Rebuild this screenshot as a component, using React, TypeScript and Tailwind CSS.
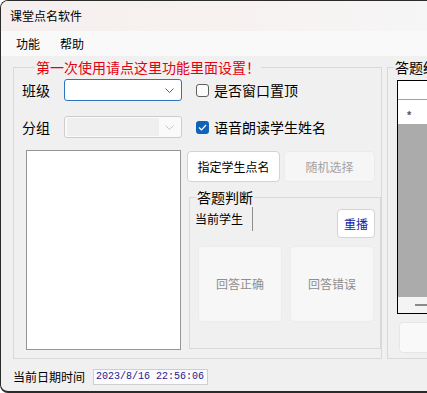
const cjk = "font-['Microsoft_YaHei','Noto_Sans_CJK_SC',sans-serif]";

function Chevron({ color }: { color: string }) {
  return (
    <svg width="9" height="5" viewBox="0 0 9 5" className="shrink-0">
      <polyline points="0.5,0.5 4.5,4.5 8.5,0.5" fill="none" stroke={color} strokeWidth="1" />
    </svg>
  );
}

function Check({ checked }: { checked?: boolean }) {
  if (checked) {
    return (
      <div className="w-[13px] h-[13px] rounded-[3px] bg-[#0f62b8] flex items-center justify-center shrink-0">
        <svg width="9" height="7" viewBox="0 0 9 7">
          <polyline points="1,3.5 3.5,6 8,1" fill="none" stroke="#ffffff" strokeWidth="1.2" />
        </svg>
      </div>
    );
  }
  return <div className="w-[13px] h-[13px] rounded-[3px] border border-[#5f5f5f] bg-[#fbfbfb] shrink-0" />;
}

export default function App() {
  return (
    <div
      className={`w-[427px] h-[393px] overflow-hidden bg-[#f0f0f0] flex flex-col border-l border-t border-b-2 border-[#2b2b2b] rounded-l-[8px] text-black ${cjk}`}
    >
      {/* title bar */}
      <div className="h-[30px] shrink-0 flex items-center pl-[9px] text-[12px] bg-linear-to-r from-[#f5efef] via-[#f7f1f0] to-[#f6f6f6]">
        课堂点名软件
      </div>

      {/* menu */}
      <div className="h-[25px] shrink-0 flex items-center pl-[15px] gap-[20px] text-[12px] bg-[#f9f9f9]">
        <span>功能</span>
        <span>帮助</span>
      </div>

      <div className="flex-1 flex flex-col">
        <div className="flex mt-[2px]">
          {/* left group */}
          <fieldset className="ml-[12px] w-[371px] h-[301px] border border-[#d9d9d9] p-0 m-0 flex flex-col">
            <legend className="ml-[21px] px-[1px] text-[14px] leading-[18px] text-[#e60012]">
              第一次使用请点这里功能里面设置！
            </legend>

            <div className="mt-[3px] pl-[8px] flex items-center h-[22px]">
              <span className="w-[42px] text-[14px]">班级</span>
              <div className="w-[118px] h-[22px] bg-white border border-[#2a76bf] rounded-[3px] flex items-center justify-end pr-[7px]">
                <Chevron color="#606060" />
              </div>
              <div className="ml-[14px]">
                <Check />
              </div>
              <span className="ml-[5px] text-[14px]">是否窗口置顶</span>
            </div>

            <div className="mt-[15px] pl-[8px] flex items-center h-[22px]">
              <span className="w-[42px] text-[14px]">分组</span>
              <div className="w-[118px] h-[22px] bg-[#fafafa] border border-[#cdcdcd] rounded-[3px] flex items-center pr-[7px]">
                <div className="flex-1 h-[18px] ml-[2px] mr-[6px] bg-[#efefef]" />
                <Chevron color="#c4c4c4" />
              </div>
              <div className="ml-[14px]">
                <Check checked />
              </div>
              <span className="ml-[5px] text-[14px]">语音朗读学生姓名</span>
            </div>

            <div className="mt-[12px] flex">
              <div className="ml-[12px] w-[155px] h-[200px] bg-white border border-[#959595]" />

              <div className="ml-[6px] flex flex-col">
                <div className="mt-[1px] flex h-[31px]">
                  <button className="w-[93px] h-[31px] bg-white border border-[#d3d3d3] rounded-[4px] text-[12px]">
                    指定学生点名
                  </button>
                  <button className="ml-[4px] w-[91px] h-[31px] bg-[#f6f6f6] border border-[#ebebeb] rounded-[4px] text-[12px] text-[#a3a3a3]">
                    随机选择
                  </button>
                </div>

                <fieldset className="mt-[6px] ml-[2px] w-[192px] h-[161px] border border-[#d9d9d9] p-0 m-0 flex flex-col">
                  <legend className="ml-[6px] px-[1px] text-[14px] leading-[18px]">答题判断</legend>

                  <div className="flex items-start">
                    <div className="ml-[5px] mt-[1px] w-[58px] h-[24px] flex items-center border-r border-[#8f8f8f] text-[12px]">
                      当前学生
                    </div>
                    <button className="ml-auto mr-[5px] mt-[3px] w-[38px] h-[29px] bg-white border border-[#d3d3d3] rounded-[4px] text-[12px] text-[#1a1aa0]">
                      重播
                    </button>
                  </div>

                  <div className="mt-[8px] ml-[8px] flex gap-[8px]">
                    <button className="w-[84px] h-[76px] bg-[#f7f7f7] border border-[#ececec] rounded-[4px] text-[12px] text-[#8e8e8e]">
                      回答正确
                    </button>
                    <button className="w-[84px] h-[76px] bg-[#f7f7f7] border border-[#ececec] rounded-[4px] text-[12px] text-[#8e8e8e]">
                      回答错误
                    </button>
                  </div>
                </fieldset>
              </div>
            </div>
          </fieldset>

          {/* right group */}
          <fieldset className="ml-[5px] w-[80px] shrink-0 h-[301px] border border-[#d9d9d9] p-0 m-0 flex flex-col">
            <legend className="ml-[6px] px-[1px] text-[14px] leading-[18px] whitespace-nowrap">答题结果</legend>
            <div className="mt-[4px] ml-[9px] h-[234px] border border-black flex flex-col">
              <div className="h-[19px] bg-white border-b border-[#a0a0a0] shrink-0" />
              <div className="h-[24px] bg-white shrink-0 flex items-center pl-[9px] pt-[6px] text-[11px] font-bold text-[#555] font-['Liberation_Sans',sans-serif]">
                *
              </div>
              <div className="flex-1 bg-[#ababab]" />
              <div className="h-[16px] bg-[#f4f4f4] shrink-0 flex items-center pl-[17px]">
                <div className="flex-1 h-[2px] bg-[#8a8a8a]" />
              </div>
            </div>
            <div className="mt-[8px] ml-[11px] h-[31px] bg-[#f9f9f9] border border-[#e6e6e6] rounded-[4px]" />
          </fieldset>
        </div>

        {/* status */}
        <div className="flex-1 flex items-center pl-[12px] pt-[3px] text-[12px]">
          <span>当前日期时间</span>
          <div className="ml-[8px] w-[115px] h-[16px] bg-[#fbfbff] border border-[#cfcfcf] flex items-center pl-[2px] text-[10px] text-[#1c1c8c] font-['Liberation_Mono',monospace]">
            2023/8/16 22:56:06
          </div>
        </div>
      </div>
    </div>
  );
}
